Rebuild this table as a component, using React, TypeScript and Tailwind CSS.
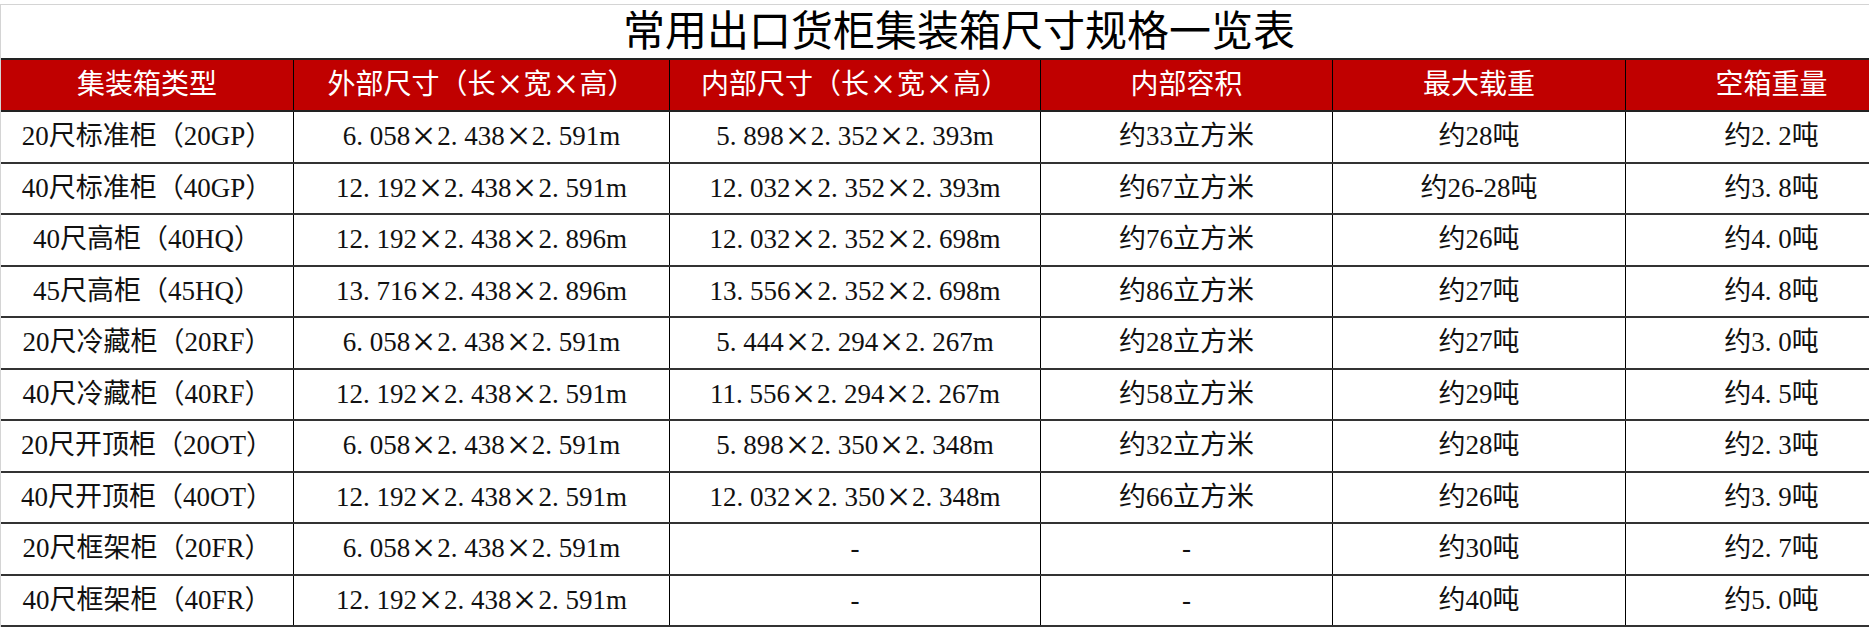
import React from "react";

const headers = [
  "集装箱类型",
  "外部尺寸（长×宽×高）",
  "内部尺寸（长×宽×高）",
  "内部容积",
  "最大载重",
  "空箱重量",
];

const rows: string[][] = [
  ["20尺标准柜（20GP）", "6.058×2.438×2.591m", "5.898×2.352×2.393m", "约33立方米", "约28吨", "约2.2吨"],
  ["40尺标准柜（40GP）", "12.192×2.438×2.591m", "12.032×2.352×2.393m", "约67立方米", "约26-28吨", "约3.8吨"],
  ["40尺高柜（40HQ）", "12.192×2.438×2.896m", "12.032×2.352×2.698m", "约76立方米", "约26吨", "约4.0吨"],
  ["45尺高柜（45HQ）", "13.716×2.438×2.896m", "13.556×2.352×2.698m", "约86立方米", "约27吨", "约4.8吨"],
  ["20尺冷藏柜（20RF）", "6.058×2.438×2.591m", "5.444×2.294×2.267m", "约28立方米", "约27吨", "约3.0吨"],
  ["40尺冷藏柜（40RF）", "12.192×2.438×2.591m", "11.556×2.294×2.267m", "约58立方米", "约29吨", "约4.5吨"],
  ["20尺开顶柜（20OT）", "6.058×2.438×2.591m", "5.898×2.350×2.348m", "约32立方米", "约28吨", "约2.3吨"],
  ["40尺开顶柜（40OT）", "12.192×2.438×2.591m", "12.032×2.350×2.348m", "约66立方米", "约26吨", "约3.9吨"],
  ["20尺框架柜（20FR）", "6.058×2.438×2.591m", "-", "-", "约30吨", "约2.7吨"],
  ["40尺框架柜（40FR）", "12.192×2.438×2.591m", "-", "-", "约40吨", "约5.0吨"],
];

// song-style spacing: × takes a full em, the dot half an em
function Txt({ s }: { s: string }) {
  return (
    <>
      {Array.from(s).map((ch, i) =>
        ch === "×" ? (
          <span key={i} className="inline-block w-[1em] text-center">
            <span className="inline-block scale-[1.55]">×</span>
          </span>
        ) : ch === "." ? (
          <span key={i} className="inline-block w-[0.5em]">.</span>
        ) : (
          <React.Fragment key={i}>{ch}</React.Fragment>
        )
      )}
    </>
  );
}

const grid = "grid grid-cols-[293px_376px_371px_292px_293px_292px]";
const font = "font-['Liberation_Serif','Noto_Sans_CJK_SC',serif]";

export default function App() {
  return (
    <div className="w-full h-[640px] overflow-hidden bg-white">
      <div className={`w-[1917px] pt-1 ${font}`}>
        <div className="border-t border-l border-[#d4d4d4]">
          <div className="h-[53px] flex items-center justify-center text-[42px] text-black leading-none">
            常用出口货柜集装箱尺寸规格一览表
          </div>

          <div className={`${grid} h-[54px] bg-[#c00000] border-y-2 border-[#222]`}>
            {headers.map((h) => (
              <div
                key={h}
                className="flex items-center justify-center border-r border-black text-[28px] font-normal text-white leading-none"
              >
                <Txt s={h} />
              </div>
            ))}
          </div>

          {rows.map((r, ri) => (
            <div key={ri} className={`${grid} h-[51.5px] border-b-2 border-[#333]`}>
              {r.map((c, ci) => (
                <div
                  key={ci}
                  className="flex items-center justify-center border-r border-black text-[27px] text-[#111] leading-none"
                >
                  <Txt s={c} />
                </div>
              ))}
            </div>
          ))}
        </div>
      </div>
    </div>
  );
}
